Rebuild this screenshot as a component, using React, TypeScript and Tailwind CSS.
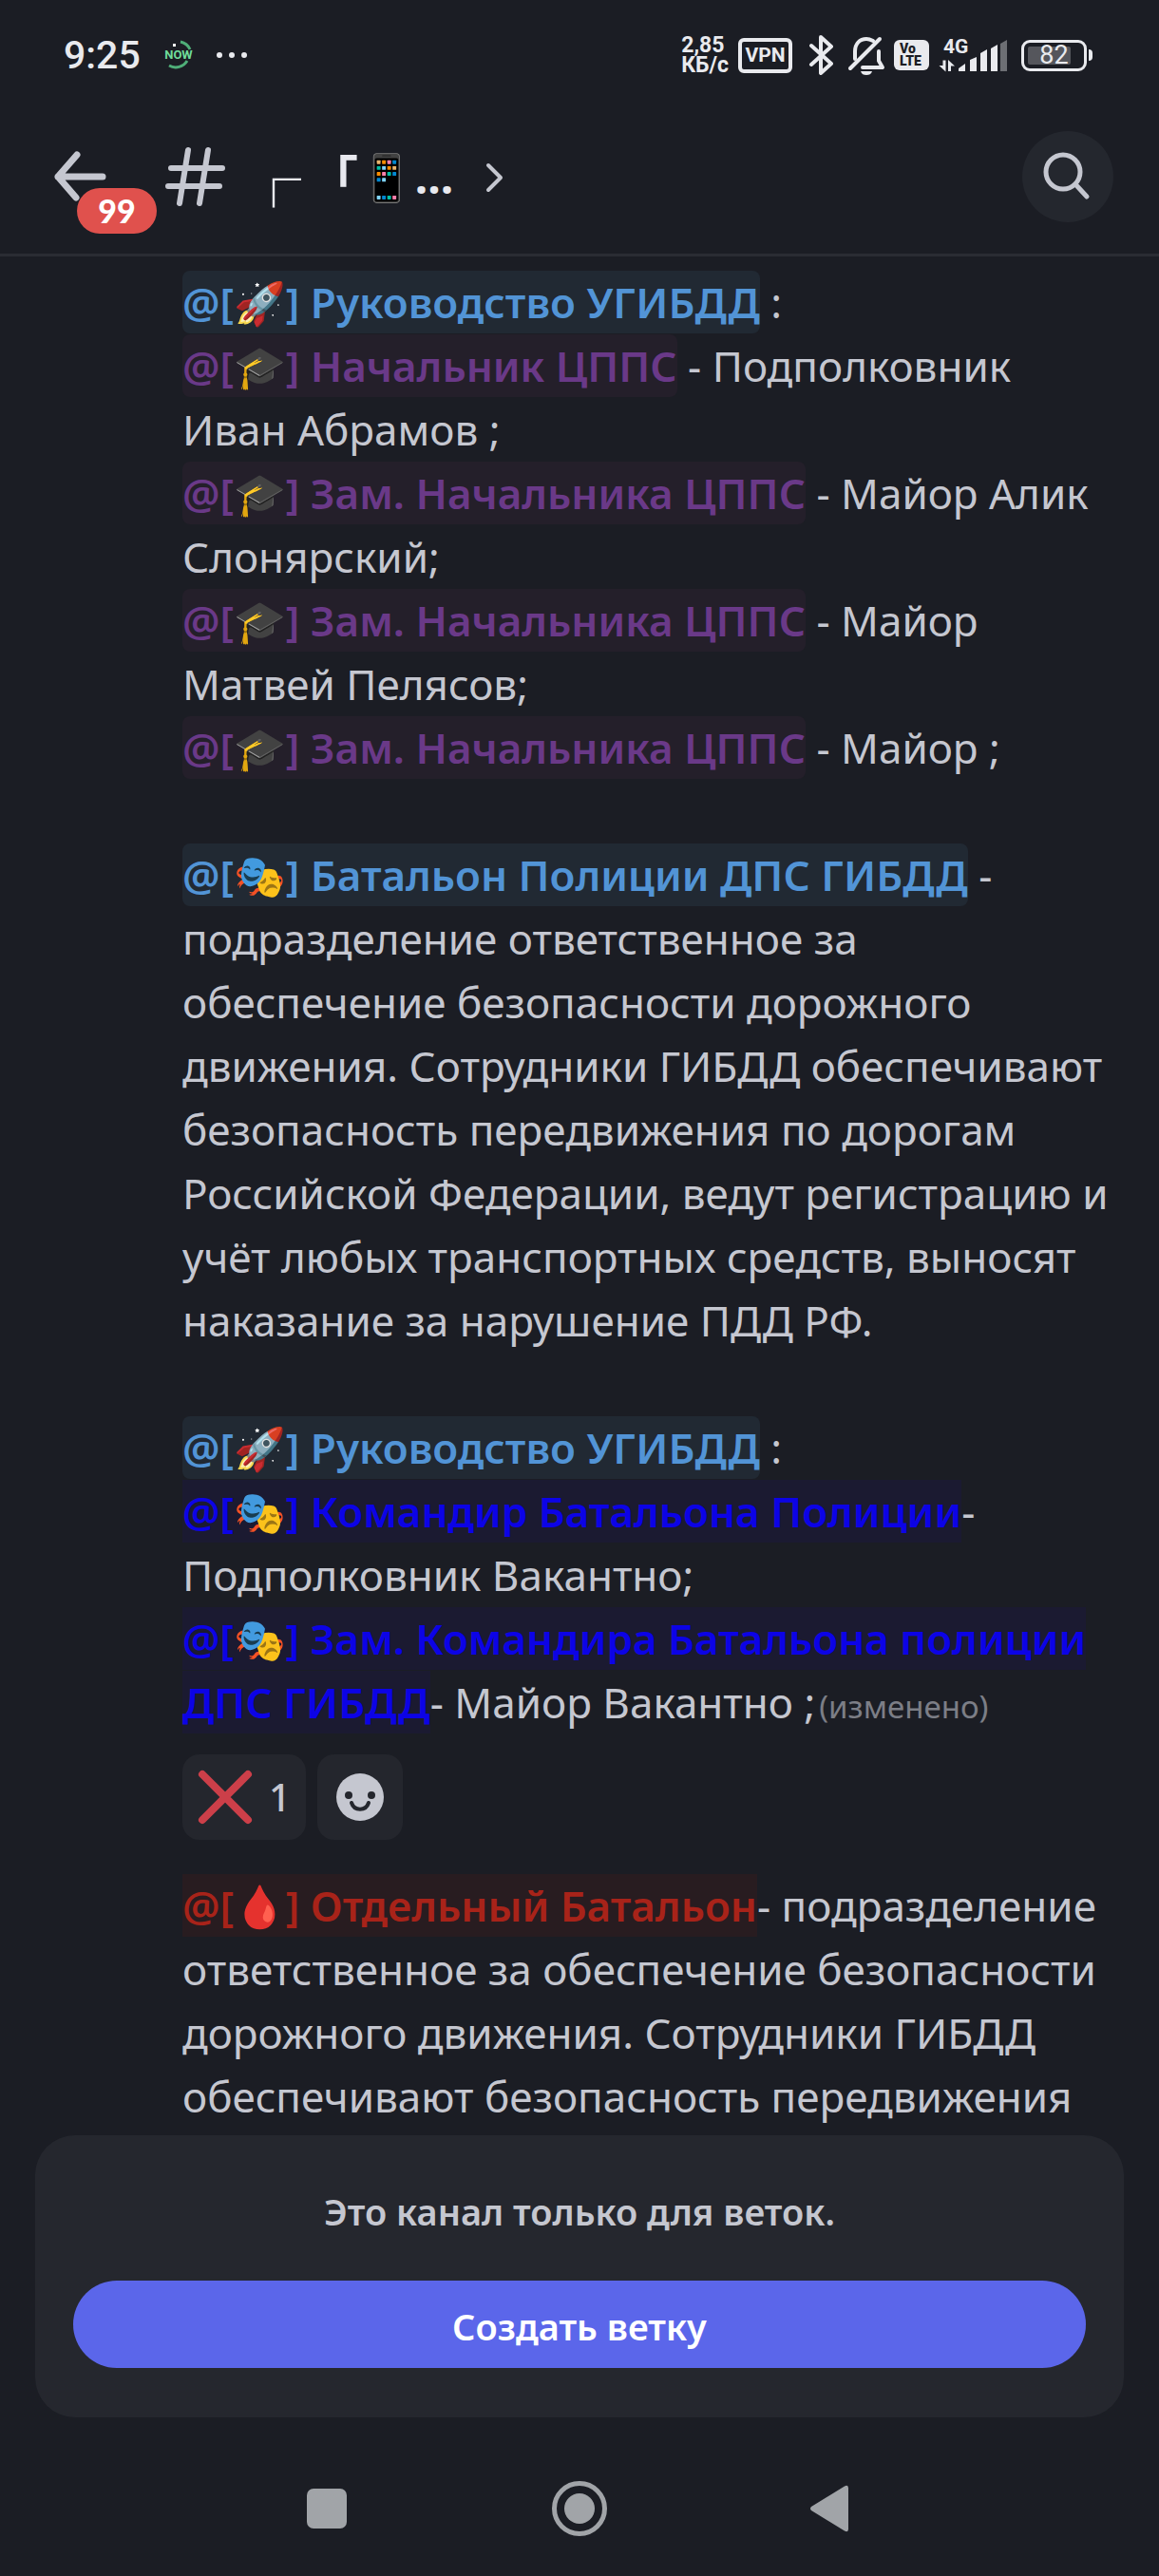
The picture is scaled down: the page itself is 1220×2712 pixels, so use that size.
import type { ReactNode } from "react";

const MENTION_TONES = {
  sky: "rounded-[8px] bg-[#212933] text-[#5294d6]",
  purple: "rounded-[8px] bg-[#241f2a] text-[#6a3988]",
  blue: "bg-[#1b1a31] text-[#0c03e6]",
  red: "bg-[#281c20] text-[#a82319]",
} as const;

function Mention({ tone, children }: { tone: keyof typeof MENTION_TONES; children: ReactNode }) {
  return (
    <a href="#role" className={`py-[3px] font-semibold ${MENTION_TONES[tone]}`}>
      {children}
    </a>
  );
}

function StatusBar() {
  return (
    <div className="flex h-[116px] items-center justify-between pr-[70px] pl-[67px] font-[Roboto,sans-serif] text-[#e9eaee]">
      <div className="flex items-center">
        <span className="text-[41px] leading-none font-medium">9:25</span>
        <svg className="ml-5 h-10 w-10" viewBox="0 0 40 40" fill="none" role="img" aria-label="NOW">
          <path d="M22 6a14 14 0 0 1 10 8" stroke="#4fae78" strokeWidth="3" />
          <path d="M10 31a14 14 0 0 0 19-5" stroke="#4fae78" strokeWidth="3" />
          <rect x="14" y="8" width="3" height="3" fill="#fff" />
          <text x="20" y="24" textAnchor="middle" fontSize="13" fontWeight="700" fill="#6fdc9a">
            NOW
          </text>
        </svg>
        <svg className="ml-5 h-2 w-8" viewBox="0 0 32 8" fill="currentColor" aria-hidden="true">
          <circle cx="3" cy="4" r="3" />
          <circle cx="16" cy="4" r="3" />
          <circle cx="29" cy="4" r="3" />
        </svg>
      </div>

      <div className="flex items-center">
        <div className="text-[23px] leading-[21px] font-bold">
          <div>2,85</div>
          <div>КБ/с</div>
        </div>
        <div className="ml-[10px] flex h-[37px] w-[57px] items-center justify-center rounded-[6px] border-4 border-current text-[21px] leading-none font-bold">
          VPN
        </div>
        <svg className="ml-4 h-[42px] w-[30px]" viewBox="0 0 30 42" fill="none" stroke="currentColor" strokeWidth="4" strokeLinejoin="round" strokeLinecap="round" role="img" aria-label="Bluetooth">
          <path d="M4 11l21 19-11 10V2l11 10L4 31" />
        </svg>
        <svg className="ml-3 h-[42px] w-[40px]" viewBox="0 0 40 42" fill="none" stroke="currentColor" strokeWidth="4" strokeLinejoin="round" strokeLinecap="round" role="img" aria-label="Без звука">
          <path d="M3 35L34 4" />
          <path d="M8 25v-8C8 9 13 4 20 4c3 0 5 1 7 2" />
          <path d="M33 17v10l4 7H16" />
          <path d="M14 38h12c-1 3-3 4-6 4s-5-1-6-4z" fill="currentColor" stroke="none" />
        </svg>
        <div className="ml-[9px] flex h-8 w-[37px] flex-col justify-center rounded-[6px] bg-[#e9eaee] pl-[6px] text-[14px] leading-[13px] font-black text-[#1b1d24]">
          <span>Vo</span>
          <span>LTE</span>
        </div>
        <div className="relative ml-[9px] h-[36px] w-[74px]">
          <span className="absolute top-0 left-[6px] text-[21px] leading-[18px] font-bold">4G</span>
          <svg className="h-full w-full" viewBox="0 0 74 36" fill="currentColor" role="img" aria-label="Уровень сигнала">
            <path d="M5.500 23.500h3v12l-7-6.500h4zM11 35V23l7 6.500h-4V35z" />
            <path d="M22 35v-3l7-5v8zM34 35V23l7-3v15zM45 35V16l7-4v23zM56 35V11l7-4v28z" />
            <path d="M66 35V6l7-4v33z" opacity=".4" />
          </svg>
        </div>
        <div className="relative ml-[14px] flex h-[33px] w-[69px] items-center justify-center rounded-[9px] border-[3px] border-current">
          <div className="absolute top-1 bottom-1 left-1 w-[45px] rounded-[2px] bg-[#55565c]" />
          <span className="relative text-[27px] leading-none">82</span>
        </div>
        <div className="ml-[2px] h-3 w-1 rounded-r bg-current" />
      </div>
    </div>
  );
}

function ChannelHeader() {
  return (
    <header className="border-b-[3px] border-[#2a2c33] pb-[11px]">
      <div className="flex h-[140px] items-center pr-12 pl-[54px]">
        <button type="button" aria-label="Назад, 99 непрочитанных" className="relative">
          <svg className="h-[60px] w-[60px]" viewBox="0 0 60 60" fill="none" stroke="#c5c7d0" strokeWidth="7" strokeLinecap="round" strokeLinejoin="round">
            <path d="M27 7L7 30l19 22M7 30h47" />
          </svg>
          <span className="absolute top-[42px] left-[27px] flex h-12 w-[84px] items-center justify-center rounded-full bg-[#e0514d] font-[Lato,sans-serif] text-[34px] leading-none font-black text-white">
            99
          </span>
        </button>
        <svg className="ml-[57px] h-[68px] w-[68px]" viewBox="0 0 68 68" fill="none" stroke="#c5c7d0" strokeWidth="6" strokeLinecap="round" aria-hidden="true">
          <path d="M27 6l-9 56M48 6l-9 56M9 25h54M6 44h54" />
        </svg>
        <button type="button" className="ml-5 flex items-center text-[48px] leading-[60px] font-bold text-[#e8e9ef]">
          <span className="font-['Noto_Sans_CJK_JP',sans-serif] text-[58px] font-normal">┌</span>
          <span className="ml-2 font-['Noto_Sans_CJK_JP',sans-serif] text-[52px]">「</span>
          <span>📱...</span>
          <svg className="ml-8 h-9 w-6" viewBox="0 0 24 36" fill="none" stroke="#c5c7d0" strokeWidth="4" strokeLinecap="round" strokeLinejoin="round" aria-hidden="true">
            <path d="M5 6l13 13L5 32" />
          </svg>
        </button>
        <button type="button" aria-label="Поиск" className="ml-auto flex h-24 w-24 items-center justify-center rounded-full bg-[#24272e]">
          <svg className="h-[52px] w-[52px]" viewBox="0 0 52 52" fill="none" stroke="#c5c7d0" strokeWidth="5" strokeLinecap="round">
            <circle cx="21" cy="21" r="18" />
            <path d="M34 34l12 13" />
          </svg>
        </button>
      </div>
    </header>
  );
}

function Reactions() {
  return (
    <div className="mt-[21px] mb-9 flex gap-3">
      <button type="button" className="flex h-[90px] w-[130px] items-center justify-center gap-[17px] rounded-[18px] bg-[#24262d]">
        <svg className="h-[58px] w-[58px]" viewBox="0 0 58 58" stroke="#cc3f49" strokeWidth="8" strokeLinecap="round" role="img" aria-label="❌">
          <path d="M5 5l48 48M53 5L5 53" />
        </svg>
        <span className="text-[40px] leading-none font-medium">1</span>
      </button>
      <button type="button" aria-label="Добавить реакцию" className="flex h-[90px] w-[90px] items-center justify-center rounded-[18px] bg-[#24262d]">
        <svg className="h-[52px] w-[52px]" viewBox="0 0 52 52">
          <circle cx="26" cy="26" r="25" fill="#c5c7d0" />
          <circle cx="14" cy="24" r="4" fill="#24262d" />
          <circle cx="38" cy="24" r="4" fill="#24262d" />
          <path d="M17 32c3 9 15 9 18 0" fill="none" stroke="#24262d" strokeWidth="4" strokeLinecap="round" />
        </svg>
      </button>
    </div>
  );
}

function Messages() {
  return (
    <main className="min-h-0 flex-1 overflow-hidden pt-[15px] pr-9 pl-48 text-[44px] leading-[67px]">
      <p>
        <Mention tone="sky">@[🚀] Руководство УГИБДД</Mention> :<br />
        <Mention tone="purple">@[🎓] Начальник ЦППС</Mention> - Подполковник
        <br />
        Иван Абрамов ;<br />
        <Mention tone="purple">@[🎓] Зам. Начальника ЦППС</Mention> - Майор Алик Слонярский;
        <br />
        <Mention tone="purple">@[🎓] Зам. Начальника ЦППС</Mention> - Майор
        <br />
        Матвей Пелясов;
        <br />
        <Mention tone="purple">@[🎓] Зам. Начальника ЦППС</Mention> - Майор ;
      </p>
      <p className="mt-[67px]">
        <Mention tone="sky">@[🎭] Батальон Полиции ДПС ГИБДД</Mention> - подразделение ответственное за
        <br />
        обеспечение безопасности дорожного
        <br />
        движения. Сотрудники ГИБДД обеспечивают безопасность передвижения по дорогам
        <br />
        Российской Федерации, ведут регистрацию и учёт любых транспортных средств, выносят
        <br />
        наказание за нарушение ПДД РФ.
      </p>
      <p className="mt-[67px]">
        <Mention tone="sky">@[🚀] Руководство УГИБДД</Mention> :<br />
        <Mention tone="blue">@[🎭] Командир Батальона Полиции</Mention>-<br />
        Подполковник Вакантно;
        <br />
        <Mention tone="blue">@[🎭] Зам. Командира Батальона полиции ДПС ГИБДД</Mention>- Майор Вакантно ;
        <span className="ml-1 text-[33px] leading-none text-[#7c7e86]">(изменено)</span>
      </p>
      <Reactions />
      <p>
        <Mention tone="red">@[🩸] Отдельный Батальон</Mention>- подразделение
        <br />
        ответственное за обеспечение безопасности
        <br />
        дорожного движения. Сотрудники ГИБДД
        <br />
        обеспечивают безопасность передвижения
      </p>
    </main>
  );
}

function ThreadComposer() {
  return (
    <section className="mx-[37px] rounded-[42px] bg-[#25272e] px-10 pt-[54px] pb-[52px] text-center">
      <p className="text-[38px] leading-[52px] font-semibold">Это канал только для веток.</p>
      <button type="button" className="mt-[47px] h-[92px] w-full rounded-full bg-[#5b66ea] pt-1 text-[38px] leading-[52px] font-semibold text-white">
        Создать ветку
      </button>
    </section>
  );
}

function SystemNav() {
  return (
    <nav className="flex h-[167px] items-center justify-center gap-[206px] pt-6 text-[#a1a4a8]">
      <button type="button" aria-label="Недавние">
        <svg className="h-[60px] w-[60px]" viewBox="0 0 60 60" fill="currentColor">
          <rect x="9" y="9" width="42" height="42" rx="7" />
        </svg>
      </button>
      <button type="button" aria-label="Домой">
        <svg className="h-[60px] w-[60px]" viewBox="0 0 60 60" fill="currentColor">
          <circle cx="30" cy="30" r="26.500" fill="none" stroke="currentColor" strokeWidth="5" />
          <circle cx="30" cy="30" r="16" />
        </svg>
      </button>
      <button type="button" aria-label="Назад">
        <svg className="h-[60px] w-[60px]" viewBox="0 0 60 60" fill="currentColor">
          <path d="M8 28L43 6.500q4-2 4 2v43q0 4-4 2L8 32q-2-2 0-4z" />
        </svg>
      </button>
    </nav>
  );
}

export default function App() {
  return (
    <div className="flex h-screen flex-col bg-[#1b1d24] font-['Noto_Sans','Noto_Color_Emoji',sans-serif] text-[#c5c7d0]">
      <StatusBar />
      <ChannelHeader />
      <Messages />
      <ThreadComposer />
      <SystemNav />
    </div>
  );
}
